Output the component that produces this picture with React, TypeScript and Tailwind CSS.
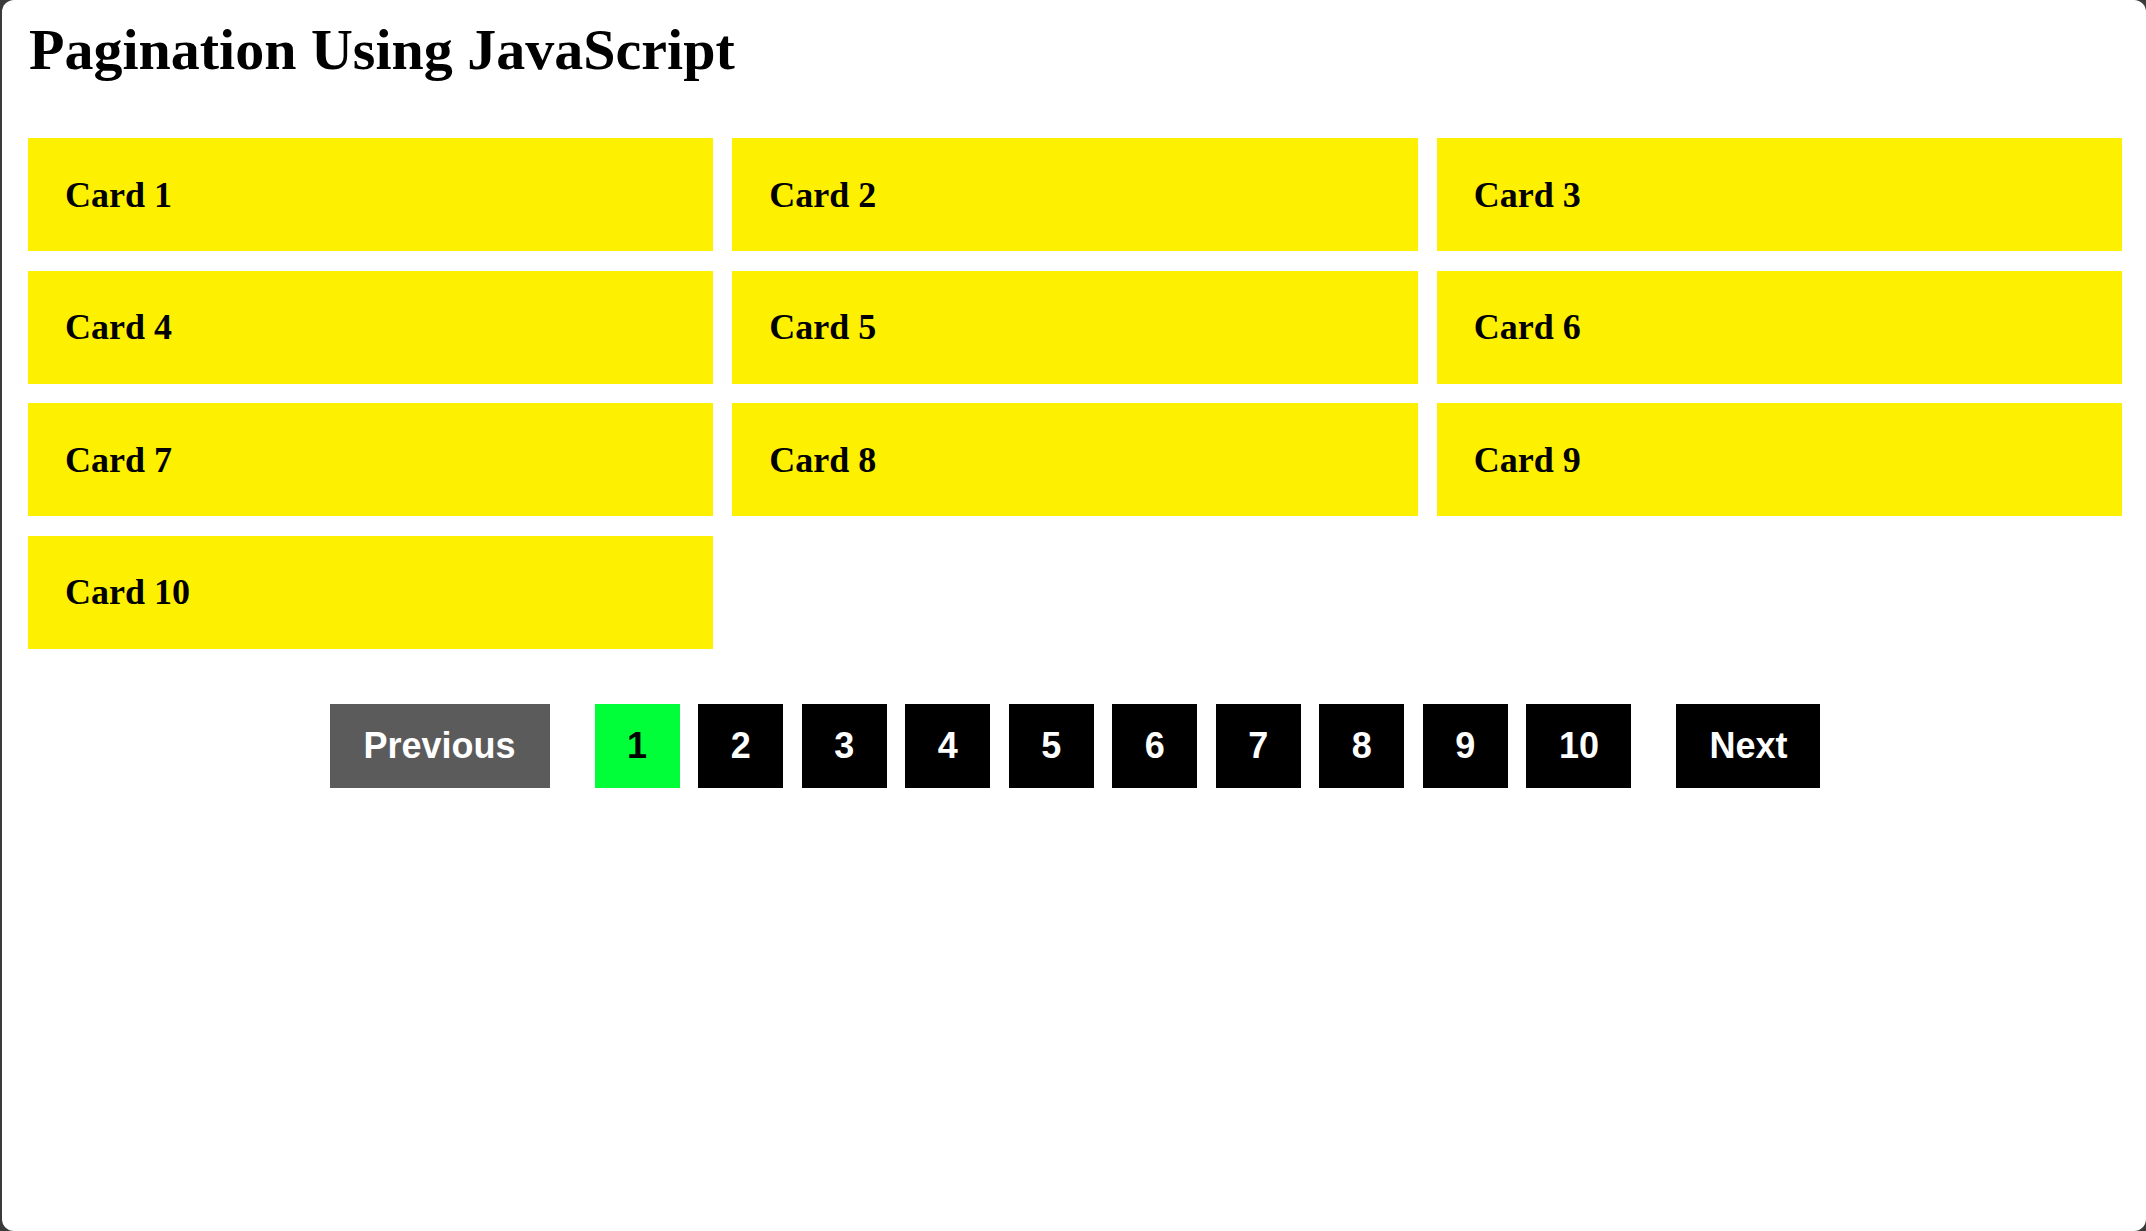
const cards = Array.from({ length: 10 }, (_, i) => `Card ${i + 1}`);
const pages = Array.from({ length: 10 }, (_, i) => i + 1);

export default function App() {
  const current = 1;

  return (
    <div className="h-[1231px] w-full bg-[#3a3a3a] overflow-hidden">
      <div className="ml-[2px] h-full bg-white rounded-[12px] pl-[26px] pr-[24px] pt-[18px]">
        {/* Title */}
        <h1 className="font-['Liberation_Serif',serif] font-bold text-[58px] leading-[64px] text-black ml-[1px]">
          Pagination Using JavaScript
        </h1>

        {/* Cards */}
        <div className="mt-[56px] grid grid-cols-3 gap-x-[19px] gap-y-[19.5px]">
          {cards.map((c) => (
            <div
              key={c}
              className="h-[113px] bg-[#fdf000] flex items-center pl-[37px] font-['Liberation_Serif',serif] font-bold text-[36px] text-black"
            >
              {c}
            </div>
          ))}
        </div>

        {/* Pagination */}
        <div className="mt-[55px] flex justify-center items-center gap-[45px] font-['Liberation_Sans',Arial,sans-serif] font-bold text-[36px] leading-[41px]">
          <button className="h-[84px] px-[34px] bg-[#5b5b5b] text-white">Previous</button>
          <div className="flex items-center gap-[18.5px]">
            {pages.map((p) => (
              <button
                key={p}
                className={
                  p === current
                    ? "h-[84px] px-[32.5px] bg-[#00ff38] text-black"
                    : "h-[84px] px-[32.5px] bg-black text-white"
                }
              >
                {p}
              </button>
            ))}
          </div>
          <button className="h-[84px] px-[33px] bg-black text-white">Next</button>
        </div>
      </div>
    </div>
  );
}
